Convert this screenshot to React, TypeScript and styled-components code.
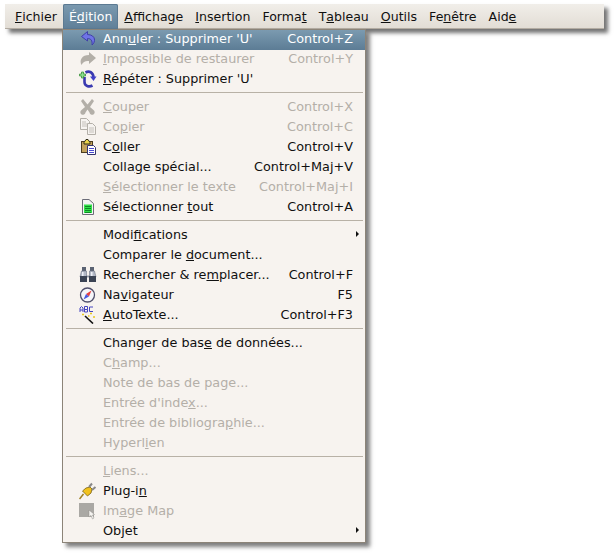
import styled, { createGlobalStyle } from 'styled-components'
import { ReactNode } from 'react'

const GlobalStyle = createGlobalStyle`
  html, body {
    margin: 0;
    padding: 0;
    background: #fff;
  }
  body {
    font-family: 'DejaVu Sans', sans-serif;
    font-size: 12.8px;
  }
`

const icons: Record<string, ReactNode> = {
  undo: (
    <svg width="18" height="18" viewBox="0 0 18 18">
      <path d="M8.500 1.500 L2.500 6.500 L8.500 11 V8.500 C12 8.500 13.500 10.500 13 15 C16.500 12.500 17.500 5 8.500 4.500 Z" fill="#6f74e6" stroke="#4040a8" strokeWidth="1" strokeLinejoin="round" />
    </svg>
  ),
  redo: (
    <svg width="18" height="18" viewBox="0 0 18 18">
      <path d="M10 2 L17 8 L10 14 V11 C6.500 10.500 4 12 2.500 15 C0 10 3 5 10 5 Z" fill="#b3afa8" />
    </svg>
  ),
  repeat: (
    <svg width="18" height="18" viewBox="0 0 18 18">
      <path d="M6.500 2.500 C10 0.500 14.500 2 14.500 8" fill="none" stroke="#3a3ab0" strokeWidth="2.600" />
      <path d="M11 6.500 L17.500 6.500 L14.500 11 Z" fill="#4040c8" />
      <path d="M5.500 7 V12 C5.500 16 10 17.500 13.500 15.500" fill="none" stroke="#3a3ab0" strokeWidth="2.600" />
      <path d="M2.500 2 H4.500 V4 H6.500 V6 H4.500 V8 H2.500 V6 H0.500 V4 H2.500 Z" fill="#8ee08e" stroke="#2f8a2f" strokeWidth="0.700" />
    </svg>
  ),
  cut: (
    <svg width="18" height="18" viewBox="0 0 18 18">
      <path d="M4 1 L8.500 6.500 L13 1 L15 3 L11 9 L14.500 12 A2.600 2.600 0 1 1 10.500 14.500 L8.500 11.500 L6.500 14.500 A2.600 2.600 0 1 1 2.500 12 L6 9 L2 3 Z" fill="#b3afa8" />
    </svg>
  ),
  copy: (
    <svg width="18" height="18" viewBox="0 0 18 18">
      <path d="M1.500 0.500 H7.500 L10.500 3.500 V11.500 H1.500 Z" fill="#f6f3f0" stroke="#b3afa8" />
      <path d="M8.500 5.500 H13.500 L16.500 8.500 V16.500 H8.500 Z" fill="#f6f3f0" stroke="#b3afa8" />
      <path d="M3 4 H7 M3 6 H8 M3 8 H8 M10 10 H15 M10 12 H15 M10 14 H15" stroke="#c4c0ba" />
    </svg>
  ),
  paste: (
    <svg width="18" height="18" viewBox="0 0 18 18">
      <rect x="2.500" y="3.500" width="11" height="11" fill="#c2a15c" stroke="#4a3d20" />
      <path d="M5 4.500 L7 1.500 H9 L11 4.500 V6 H5 Z" fill="#ecd64c" stroke="#2e2a18" />
      <path d="M8.500 7.500 H14.500 L16.500 9.500 V16.500 H8.500 Z" fill="#fff" stroke="#35356e" />
      <path d="M10 10.500 H15 M10 12.500 H15 M10 14.500 H15" stroke="#4a4ad0" />
    </svg>
  ),
  selectAll: (
    <svg width="18" height="18" viewBox="0 0 18 18">
      <path d="M3.500 1.500 H10 L14.500 5.500 V16.500 H3.500 Z" fill="#f4f4f4" stroke="#6c6c78" />
      <rect x="5" y="6.500" width="8" height="8.500" fill="#32e04a" />
      <path d="M6 8.500 H12 M6 10.500 H12 M6 12.500 H12 M6 14.500 H12" stroke="#0d8a25" />
    </svg>
  ),
  binoculars: (
    <svg width="18" height="18" viewBox="0 0 18 18">
      <rect x="3" y="1" width="4" height="4" fill="#5a6272" />
      <rect x="11" y="1" width="4" height="4" fill="#5a6272" />
      <path d="M2.500 5 H7.500 V10 H10.500 V5 H15.500 L17 11 H1 Z" fill="#b4b9c6" stroke="#6c7484" strokeWidth="0.600" />
      <rect x="1" y="10" width="7" height="6" fill="#3c4454" />
      <rect x="10" y="10" width="7" height="6" fill="#3c4454" />
      <rect x="3" y="6" width="1.500" height="4" fill="#eef0f6" />
      <rect x="12" y="6" width="1.500" height="4" fill="#eef0f6" />
    </svg>
  ),
  compass: (
    <svg width="18" height="18" viewBox="0 0 18 18">
      <circle cx="8.500" cy="9" r="7" fill="#f6f6fa" stroke="#50506c" strokeWidth="1.300" />
      <path d="M12.500 4.500 L10 10.500 L7 8 Z" fill="#e84040" />
      <path d="M4.500 13.500 L7 8 L10 10.500 Z" fill="#4a5ae0" />
    </svg>
  ),
  autoText: (
    <svg width="18" height="18" viewBox="0 0 18 18">
      <path d="M1 6 V2 L2.500 0.500 L4 2 V6 M1 4 H4 M5.500 0.500 V6 H8.500 V3.500 H5.500 M5.500 0.500 H8.500 V3.500 M14 1 H10.500 V5.500 H14" fill="none" stroke="#4646c0" />
      <path d="M6 10 L14 17.500" stroke="#111" strokeWidth="1.600" />
      <path d="M3 8.500 H5 M11 7.500 H13 M14 11 H16 M9 10 H10.500" stroke="#e8c820" strokeWidth="1.500" />
    </svg>
  ),
  plug: (
    <svg width="18" height="18" viewBox="0 0 18 18">
      <path d="M0.500 17 L4.500 12" stroke="#a08020" strokeWidth="1.500" />
      <path d="M3.500 9 L8.500 14 L12 11 L13 7 L11 5 L7 6 Z" fill="#f2c21c" stroke="#7a6010" strokeWidth="0.800" />
      <path d="M10 5 L13 1.500 M13 8 L16.500 5" stroke="#888" strokeWidth="2" />
    </svg>
  ),
  imageMap: (
    <svg width="18" height="18" viewBox="0 0 18 18">
      <rect x="-1" y="1" width="16" height="14" fill="#aaa8a4" />
      <path d="M10 8 L10 15 L12 13.500 L13.500 17 L15 16 L13.500 13 L15.500 12.500 Z" fill="#f5f3f0" stroke="#8c8a86" strokeWidth="0.500" />
    </svg>
  ),
}

type Entry = {
  label: ReactNode
  shortcut?: string
  icon?: string
  disabled?: boolean
  active?: boolean
  submenu?: boolean
}

const groups: Entry[][] = [
  [
    { label: <>Ann<u>u</u>ler : Supprimer 'U'</>, shortcut: 'Control+Z', icon: 'undo', active: true },
    { label: <><u>I</u>mpossible de restaurer</>, shortcut: 'Control+Y', icon: 'redo', disabled: true },
    { label: <><u>R</u>épéter : Supprimer 'U'</>, icon: 'repeat' },
  ],
  [
    { label: <><u>C</u>ouper</>, shortcut: 'Control+X', icon: 'cut', disabled: true },
    { label: <>Co<u>p</u>ier</>, shortcut: 'Control+C', icon: 'copy', disabled: true },
    { label: <>C<u>o</u>ller</>, shortcut: 'Control+V', icon: 'paste' },
    { label: <>Colla<u>g</u>e spécial...</>, shortcut: 'Control+Maj+V' },
    { label: <><u>S</u>électionner le texte</>, shortcut: 'Control+Maj+I', disabled: true },
    { label: <>Sélectionner <u>t</u>out</>, shortcut: 'Control+A', icon: 'selectAll' },
  ],
  [
    { label: <>Modi<u>f</u>ications</>, submenu: true },
    { label: <>Comparer le <u>d</u>ocument...</> },
    { label: <>Rechercher &amp; re<u>m</u>placer...</>, shortcut: 'Control+F', icon: 'binoculars' },
    { label: <>Na<u>v</u>igateur</>, shortcut: 'F5', icon: 'compass' },
    { label: <><u>A</u>utoTexte...</>, shortcut: 'Control+F3', icon: 'autoText' },
  ],
  [
    { label: <>Changer de bas<u>e</u> de données...</> },
    { label: <>C<u>h</u>amp...</>, disabled: true },
    { label: <>Note de bas de page...</>, disabled: true },
    { label: <>Entrée d'inde<u>x</u>...</>, disabled: true },
    { label: <>Entrée de bibliogra<u>p</u>hie...</>, disabled: true },
    { label: <>Hyperl<u>i</u>en</>, disabled: true },
  ],
  [
    { label: <><u>L</u>iens...</>, disabled: true },
    { label: <>Plug-i<u>n</u></>, icon: 'plug' },
    { label: <>Im<u>a</u>ge Map</>, icon: 'imageMap', disabled: true },
    { label: <>Ob<u>j</u>et</>, submenu: true },
  ],
]

const topItems: { label: ReactNode; open?: boolean }[] = [
  { label: <><u>F</u>ichier</> },
  { label: <>É<u>d</u>ition</>, open: true },
  { label: <><u>A</u>ffichage</> },
  { label: <><u>I</u>nsertion</> },
  { label: <>Forma<u>t</u></> },
  { label: <>T<u>a</u>bleau</> },
  { label: <><u>O</u>utils</> },
  { label: <>Fe<u>n</u>être</> },
  { label: <>Aid<u>e</u></> },
]

export default function App() {
  return (
    <Page>
      <GlobalStyle />
      <MenuBar>
        {topItems.map((item, i) => (
          <TopItem key={i} $open={item.open}>
            {item.label}
          </TopItem>
        ))}
      </MenuBar>
      <Dropdown>
        {groups.map((group, g) => (
          <Group key={g}>
            {g > 0 && <Separator />}
            {group.map((entry, i) => (
              <Row key={i} $active={entry.active} $disabled={entry.disabled}>
                <IconSlot>{entry.icon && icons[entry.icon]}</IconSlot>
                <Label>{entry.label}</Label>
                {entry.shortcut && <Shortcut>{entry.shortcut}</Shortcut>}
                {entry.submenu && <Arrow />}
              </Row>
            ))}
          </Group>
        ))}
      </Dropdown>
    </Page>
  )
}

const Page = styled.div`
  position: relative;
  width: 616px;
  height: 554px;
  padding: 4px 12px 0 5px;
  box-sizing: border-box;
  overflow: hidden;
  background: #fff;
`

const MenuBar = styled.div`
  display: flex;
  align-items: stretch;
  height: 25px;
  padding: 0 4px;
  box-sizing: border-box;
  font-size: 12.55px;
  background: linear-gradient(#f1eee9, #e2ddd5);
  border-bottom: 1px solid #b3aca2;
  box-shadow: 4px 4px 4px rgba(0, 0, 0, 0.55);
`

const TopItem = styled.div<{ $open?: boolean }>`
  display: flex;
  align-items: center;
  padding: 0 6px;
  margin-bottom: -1px;
  color: ${(props) => (props.$open ? '#fff' : '#101010')};
  background: ${(props) => (props.$open ? 'linear-gradient(#7b9ab0, #5f7f98)' : 'none')};
  border-radius: ${(props) => (props.$open ? '2px 2px 0 0' : '0')};
  box-shadow: ${(props) => (props.$open ? 'inset 0 0 0 1px #5c7a92' : 'none')};
`

const Dropdown = styled.div`
  position: absolute;
  left: 62px;
  top: 29px;
  width: 304px;
  height: 514px;
  padding: 0 2px;
  box-sizing: border-box;
  background: #f7f3ef;
  border: 1px solid #8c8478;
  box-shadow: 4px 4px 4px rgba(0, 0, 0, 0.5);
`

const Group = styled.div`
  display: flex;
  flex-direction: column;
`

const Separator = styled.div`
  height: 1px;
  margin: 2px 0 5px 1px;
  background: #b8b1a6;
`

const Row = styled.div<{ $active?: boolean; $disabled?: boolean }>`
  display: flex;
  align-items: center;
  height: 20px;
  margin: 0 -2px;
  padding: 0 12px 4px 16px;
  box-sizing: border-box;
  color: ${(props) => (props.$active ? '#fff' : props.$disabled ? '#b4afa8' : '#101010')};
  background: ${(props) => (props.$active ? 'linear-gradient(#7b9ab0, #5c7c95)' : 'none')};
`

const IconSlot = styled.span`
  display: flex;
  flex: none;
  align-items: center;
  width: 24px;
  height: 16px;
  margin-top: 2px;
`

const Label = styled.span`
  flex: 1;
  white-space: nowrap;
`

const Shortcut = styled.span`
  white-space: nowrap;
`

const Arrow = styled.span`
  width: 0;
  height: 0;
  margin-right: -6px;
  border-left: 3px solid #101010;
  border-top: 3px solid transparent;
  border-bottom: 3px solid transparent;
`
